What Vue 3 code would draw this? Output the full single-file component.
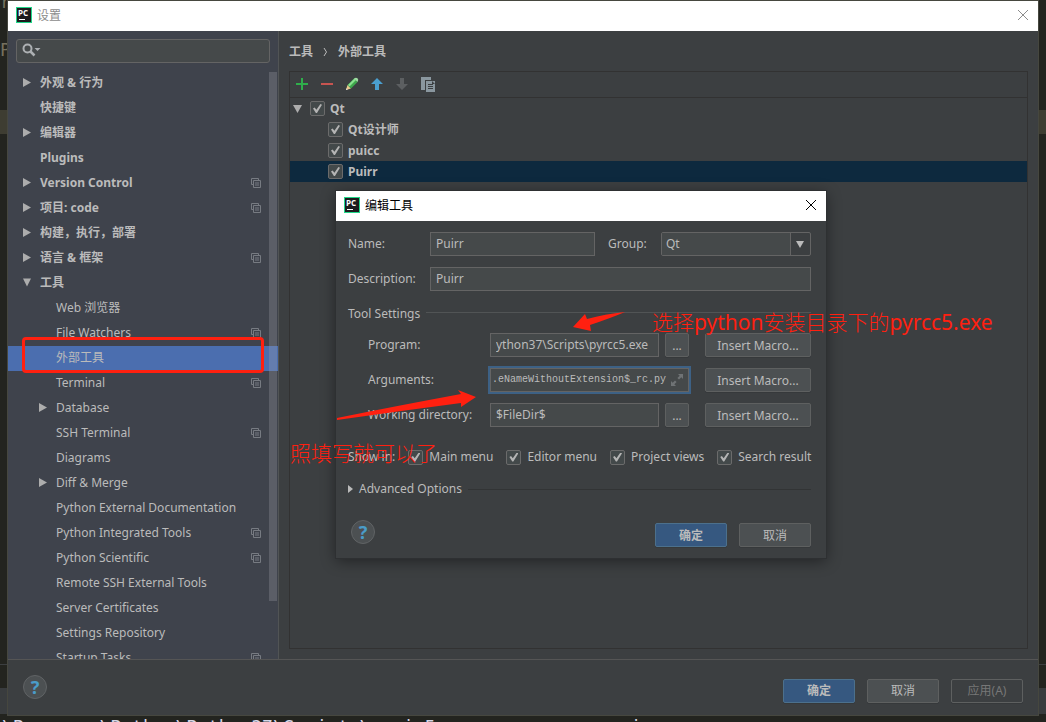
<script setup>
import { ref } from 'vue'

const nav = [
  { label: '外观 & 行为', level: 0, arrow: 'right' },
  { label: '快捷键', level: 0 },
  { label: '编辑器', level: 0, arrow: 'right' },
  { label: 'Plugins', level: 0 },
  { label: 'Version Control', level: 0, arrow: 'right', project: true },
  { label: '项目: code', level: 0, arrow: 'right', project: true },
  { label: '构建，执行，部署', level: 0, arrow: 'right' },
  { label: '语言 & 框架', level: 0, arrow: 'right', project: true },
  { label: '工具', level: 0, arrow: 'down' },
  { label: 'Web 浏览器', level: 1 },
  { label: 'File Watchers', level: 1, project: true },
  { label: '外部工具', level: 1, active: true },
  { label: 'Terminal', level: 1, project: true },
  { label: 'Database', level: 1, arrow: 'right' },
  { label: 'SSH Terminal', level: 1, project: true },
  { label: 'Diagrams', level: 1 },
  { label: 'Diff & Merge', level: 1, arrow: 'right' },
  { label: 'Python External Documentation', level: 1 },
  { label: 'Python Integrated Tools', level: 1, project: true },
  { label: 'Python Scientific', level: 1, project: true },
  { label: 'Remote SSH External Tools', level: 1 },
  { label: 'Server Certificates', level: 1 },
  { label: 'Settings Repository', level: 1 },
  { label: 'Startup Tasks', level: 1, project: true }
]

const tools = ref([
  { label: 'Qt', root: true, on: true },
  { label: 'Qt设计师', on: true },
  { label: 'puicc', on: true },
  { label: 'Puirr', on: true, active: true }
])

const showIn = ref([
  { label: 'Main menu', on: true },
  { label: 'Editor menu', on: true },
  { label: 'Project views', on: true },
  { label: 'Search result', on: true }
])

const query = ref('')
const form = ref({
  name: 'Puirr',
  group: 'Qt',
  description: 'Puirr',
  program: 'ython37\\Scripts\\pyrcc5.exe',
  args: '.eNameWithoutExtension$_rc.py',
  dir: '$FileDir$'
})
const command = '\\Programs\\Python\\Python37\\Scripts\\pyuic5 -o menu.py menu.ui'
</script>

<template>
  <div class="desktop">
    <div class="editor" aria-hidden="true">
      <span class="code code-a">r</span>
      <span class="code code-b">P</span>
      <div class="caret-line"></div>
      <div class="split-line"></div>
      <div class="tool-strip"></div>
    </div>

    <main class="window">
      <header class="titlebar">
        <svg class="logo" viewBox="0 0 16 16">
          <rect width="16" height="16" fill="#21d789" />
          <rect x="1" y="1" width="14" height="14" fill="#1c1c1e" />
          <text x="2" y="9" class="logo-text">PC</text>
          <rect x="3" y="12" width="6" height="1" fill="#fff" />
        </svg>
        <h1>设置</h1>
        <button class="close" aria-label="关闭">
          <svg viewBox="0 0 12 12"><path d="M1 1 11 11M11 1 1 11" /></svg>
        </button>
      </header>

      <div class="body">
        <aside class="sidebar">
          <label class="search">
            <svg viewBox="0 0 20 14">
              <circle cx="5.5" cy="5.5" r="4" fill="none" stroke="#adb0b3" stroke-width="2" />
              <path d="M8.5 8.5 12.5 12.5" stroke="#adb0b3" stroke-width="2.5" />
              <path d="M12.5 5H18.5L15.5 8Z" fill="#adb0b3" />
            </svg>
            <input v-model="query" type="text" aria-label="搜索设置" />
          </label>
          <nav class="tree">
            <a
              v-for="item in nav"
              :key="item.label"
              href="#"
              class="nav-row"
              :class="{ child: item.level === 1, active: item.active }"
            >
              <span class="twisty">
                <svg v-if="item.arrow === 'right'" viewBox="0 0 8 10"><path d="M0 0 8 4.5 0 9Z" /></svg>
                <svg v-if="item.arrow === 'down'" viewBox="0 0 8 10"><path d="M0 .5H8L4 8.5Z" /></svg>
              </span>
              <span class="nav-label">{{ item.label }}</span>
              <svg v-if="item.project" class="project" viewBox="0 0 10 10">
                <path d="M2.5 6.5H.5V.5H7.5V2M2.5 2.5H9.5V9.5H2.5ZM4 5H8M4 7H8" />
              </svg>
            </a>
            <span class="thumb"></span>
          </nav>
        </aside>

        <section class="content">
          <div class="crumbs">
            <span>工具</span>
            <svg viewBox="0 0 5 10"><path d="M1 1 3.5 5 1 9" /></svg>
            <span>外部工具</span>
          </div>
          <div class="panel">
            <div class="toolbar">
              <button aria-label="添加">
                <svg viewBox="0 0 16 16"><path d="M2 8H14M8 2V14" stroke="#2fae4b" stroke-width="2" /></svg>
              </button>
              <button aria-label="删除">
                <svg viewBox="0 0 16 16"><path d="M2 8H14" stroke="#c75450" stroke-width="2" /></svg>
              </button>
              <button aria-label="编辑">
                <svg viewBox="0 0 16 16">
                  <path d="M2 14 3.5 9 7 12.5Z" fill="#e8c98c" />
                  <path d="M3.5 9 10 2.5 13.5 6 7 12.5Z" fill="#3fa84c" />
                  <path d="M4 9 10.5 2.5 12 4 5.5 10.5Z" fill="#8be08f" />
                  <path d="M10 2.5Q12 1 13.5 2.3T13.5 6Z" fill="#9fdca3" />
                  <path d="M2 14 2.6 12.2 3.8 13.4Z" fill="#eee" />
                </svg>
              </button>
              <button aria-label="上移">
                <svg viewBox="0 0 16 16"><path d="M8 2 14 8H10V14H6V8H2Z" fill="#4a9fd0" /></svg>
              </button>
              <button aria-label="下移" disabled>
                <svg viewBox="0 0 16 16"><path d="M8 14 14 8H10V2H6V8H2Z" fill="#5c5f61" /></svg>
              </button>
              <button aria-label="复制">
                <svg viewBox="0 0 16 16">
                  <path d="M1 1H11V4H5V14H1Z" fill="#8a979f" />
                  <path d="M6 5H12V8H15V16H6Z" fill="#8a979f" />
                  <path d="M12 5H15V8" fill="#8a979f" />
                  <path d="M8 8.5H13M8 10.5H13M8 12.5H13" stroke="#3c3f41" />
                </svg>
              </button>
            </div>
            <ul class="tools">
              <li
                v-for="t in tools"
                :key="t.label"
                :class="{ root: t.root, active: t.active }"
              >
                <svg v-if="t.root" class="fold" viewBox="0 0 10 10"><path d="M0 1H9L4.5 9Z" /></svg>
                <label class="check"><input v-model="t.on" type="checkbox" />{{ t.label }}</label>
              </li>
            </ul>
          </div>
        </section>
      </div>

      <footer class="footer">
        <button class="help">?</button>
        <span class="spring"></span>
        <button class="btn wide primary">确定</button>
        <button class="btn wide">取消</button>
        <button class="btn wide off" disabled>应用(A)</button>
      </footer>
    </main>

    <div class="terminal">{{ command }}</div>

    <section class="dialog" role="dialog" aria-label="编辑工具">
      <header class="titlebar front">
        <svg class="logo" viewBox="0 0 16 16">
          <rect width="16" height="16" fill="#21d789" />
          <rect x="1" y="1" width="14" height="14" fill="#1c1c1e" />
          <text x="2" y="9" class="logo-text">PC</text>
          <rect x="3" y="12" width="6" height="1" fill="#fff" />
        </svg>
        <h2>编辑工具</h2>
        <button class="close" aria-label="关闭">
          <svg viewBox="0 0 12 12"><path d="M1 1 11 11M11 1 1 11" /></svg>
        </button>
      </header>

      <form class="form" @submit.prevent>
        <div class="row">
          <label class="lead" for="f-name">Name:</label>
          <input id="f-name" v-model="form.name" class="field" type="text" />
          <label class="mid" for="f-group">Group:</label>
          <div class="select">
            <select id="f-group" v-model="form.group"><option>Qt</option></select>
            <svg viewBox="0 0 8 7"><path d="M0 0H8L4 7Z" /></svg>
          </div>
        </div>
        <div class="row">
          <label class="lead" for="f-desc">Description:</label>
          <input id="f-desc" v-model="form.description" class="field" type="text" />
        </div>

        <div class="legend settings">Tool Settings<span class="rule"></span></div>

        <div class="row inset">
          <label class="lead long" for="f-prog">Program:</label>
          <input id="f-prog" v-model="form.program" class="field" type="text" />
          <button class="btn dots">...</button>
          <button class="btn macro">Insert Macro...</button>
        </div>
        <div class="row inset">
          <label class="lead long" for="f-args">Arguments:</label>
          <div class="field focus">
            <input id="f-args" v-model="form.args" type="text" />
            <svg viewBox="0 0 12 12">
              <path d="M7 0H12V5L10.3 3.3 8 5.6 6.4 4 8.7 1.7ZM0 7 1.7 8.7 4 6.4 5.6 8 3.3 10.3 5 12H0Z" />
            </svg>
          </div>
          <button class="btn macro">Insert Macro...</button>
        </div>
        <div class="row inset">
          <label class="lead long" for="f-dir">Working directory:</label>
          <input id="f-dir" v-model="form.dir" class="field" type="text" />
          <button class="btn dots">...</button>
          <button class="btn macro">Insert Macro...</button>
        </div>

        <div class="show-in">
          <span>Show in:</span>
          <label v-for="s in showIn" :key="s.label" class="check">
            <input v-model="s.on" type="checkbox" />{{ s.label }}
          </label>
        </div>

        <div class="legend advanced">
          <svg viewBox="0 0 5 8"><path d="M0 0 5 4 0 8Z" /></svg>
          Advanced Options<span class="rule dark"></span>
        </div>

        <div class="actions">
          <button class="help">?</button>
          <span class="spring"></span>
          <button class="btn wide primary">确定</button>
          <button class="btn wide">取消</button>
        </div>
      </form>
    </section>

    <div class="marks">
      <div class="mark-box"></div>
      <svg class="arrow arrow-top" viewBox="0 0 54 20">
        <path d="M0 15 12 2 14 7Q32 2 52 0 38 6 17 13L18 19Z" />
      </svg>
      <svg class="arrow arrow-args" viewBox="0 0 142 32">
        <path d="M1 29Q60 17 125 5L122 1 140 8 125 18V14Q64 22 1 31Z" />
      </svg>
      <p class="mark mark-top">选择<span>python</span>安装目录下的<span>pyrcc5.exe</span></p>
      <p class="mark mark-fill">照填写就可以了</p>
    </div>
  </div>
</template>

<style>
body {
  background: #23241f;
}
</style>

<style scoped>
* {
  box-sizing: border-box;
}
.desktop {
  position: relative;
  display: flex;
  flex-direction: column;
  height: 100vh;
  min-height: 600px;
  padding-top: 1px;
  overflow: hidden;
  background: #23241f;
  color: #bbbbbb;
  font: 12px/16px "Noto Sans", "Noto Sans CJK SC", sans-serif;
}
button,
input,
select {
  font: inherit;
  color: inherit;
}
button {
  padding: 0;
  border: 0;
  background: none;
}
h1,
h2,
p,
ul {
  margin: 0;
  padding: 0;
  font: inherit;
}
svg {
  display: block;
  flex: none;
}

.editor {
  position: absolute;
  inset: 0;
}
.code {
  position: absolute;
  left: 0;
  color: #75715e;
  font: 18px/20px "DejaVu Sans Mono", monospace;
}
.code-a {
  top: -8px;
}
.code-b {
  top: 40px;
}
.caret-line {
  position: absolute;
  top: 110px;
  width: 100%;
  height: 24px;
  background: #3e3d32;
}
.split-line {
  position: absolute;
  bottom: 57px;
  width: 100%;
  height: 1px;
  background: #3c3f41;
}
.tool-strip {
  position: absolute;
  bottom: 8px;
  width: 100%;
  height: 26px;
  background: #393c3e;
}

.window {
  position: relative;
  display: flex;
  flex: 1;
  flex-direction: column;
  min-height: 0;
  margin: 0 8px;
  background: #3c3f41;
  box-shadow: 0 0 0 1px #46473f;
}
.titlebar {
  display: flex;
  flex: none;
  align-items: center;
  height: 30px;
  padding: 0 9px 2px 8px;
  background: #ffffff;
  color: #8c8c8c;
}
.titlebar h1,
.titlebar h2 {
  flex: 1;
  padding-top: 2px;
  margin-left: 5px;
}
.logo {
  width: 16px;
  height: 16px;
}
.logo-text {
  fill: #ffffff;
  font: bold 8px "Open Sans", sans-serif;
}
.close svg {
  width: 12px;
  height: 12px;
  fill: none;
  stroke: #8c8c8c;
}
.front {
  color: #000000;
}
.front .close svg {
  stroke: #000000;
}

.body {
  display: flex;
  flex: 1;
  min-height: 0;
}
.sidebar {
  display: flex;
  flex: none;
  flex-direction: column;
  width: 271px;
  border-right: 1px solid #515455;
  background: #3f434c;
}
.search {
  display: flex;
  flex: none;
  align-items: center;
  height: 24px;
  margin: 8px;
  padding: 0 5px 2px;
  border: 1px solid #646464;
  border-radius: 3px;
  background: #45494a;
}
.search svg {
  width: 20px;
  height: 14px;
}
.search input {
  flex: 1;
  min-width: 0;
  border: 0;
  outline: 0;
  background: none;
}
.tree {
  position: relative;
  flex: 1;
  min-height: 0;
  overflow: hidden;
}
.thumb {
  position: absolute;
  top: 1px;
  right: 1px;
  width: 8px;
  height: 90%;
  background: rgba(166, 166, 176, 0.28);
}
.nav-row {
  display: flex;
  align-items: center;
  height: 25px;
  padding: 0 17px 2px 15px;
  color: #bbbbbb;
  font-weight: 700;
  text-decoration: none;
}
.nav-row.child {
  padding-left: 31px;
  font-weight: 400;
}
.nav-row.active {
  background: #4b6eaf;
}
.twisty {
  width: 17px;
}
.twisty svg {
  width: 8px;
  height: 10px;
  fill: #adadad;
}
.nav-label {
  flex: 1;
  white-space: nowrap;
}
.project {
  width: 10px;
  height: 10px;
  fill: none;
  stroke: #777b82;
}

.content {
  display: flex;
  flex: 1;
  flex-direction: column;
  min-width: 0;
  padding: 13px 10px 10px;
}
.crumbs {
  display: flex;
  gap: 10px;
  align-items: center;
  height: 16px;
  margin-bottom: 11px;
  font-weight: 600;
}
.crumbs svg {
  width: 5px;
  height: 10px;
  fill: none;
  stroke: #bbbbbb;
}
.panel {
  flex: 1;
  min-height: 0;
  border: 1px solid #323232;
}
.toolbar {
  display: flex;
  gap: 9px;
  align-items: center;
  height: 26px;
  padding: 0 4px 1px;
  border-bottom: 1px solid #323232;
}
.toolbar svg {
  width: 16px;
  height: 16px;
}
.toolbar button:last-child {
  margin-left: 1px;
}
.tools {
  list-style: none;
}
.tools li {
  display: flex;
  align-items: center;
  height: 21px;
  padding-left: 38px;
  font-weight: 700;
}
.tools .root {
  gap: 7px;
  padding-left: 3px;
}
.tools .active {
  background: #0d293e;
}
.fold {
  width: 10px;
  height: 10px;
  fill: #adadad;
}
.check {
  display: flex;
  gap: 5px;
  align-items: center;
}
.check input {
  display: grid;
  place-items: center;
  width: 15px;
  height: 15px;
  margin: 0;
  border: 1px solid #6b6b6b;
  border-radius: 2px;
  background: #43494a;
  appearance: none;
}
.check input:checked::after {
  width: 9px;
  height: 9px;
  background: #b4b4b4;
  clip-path: polygon(0 50%, 18% 40%, 38% 65%, 82% 0, 100% 8%, 44% 100%, 32% 100%);
  content: "";
}

.footer {
  display: flex;
  flex: none;
  align-items: center;
  height: 56px;
  padding: 6px 15px 0;
  border-top: 1px solid #555555;
}
.spring {
  flex: 1;
}
.help {
  align-self: flex-start;
  width: 24px;
  height: 24px;
  border: 1px solid #606365;
  border-radius: 50%;
  background: #4c5052;
  color: #4a9cc9;
  font-size: 18px;
  font-weight: 700;
  line-height: 20px;
}
.footer .help {
  margin-top: 9px;
}
.btn {
  height: 24px;
  padding-top: 1px;
  border: 1px solid #5e6060;
  border-radius: 2px;
  background: #4c5052;
  box-shadow: 0 1px 0 #36393b;
  text-align: center;
}
.wide {
  width: 72px;
  margin-left: 12px;
}
.primary {
  border-color: #4c708c;
  background: #365880;
  font-weight: 600;
}
.off {
  background: #3c3f41;
  color: #777777;
}

.terminal {
  flex: none;
  height: 7px;
  padding: 2px 0 0 2px;
  overflow: hidden;
  background: #23241f;
  color: #d6d6e8;
  font: 18px/20px "DejaVu Sans Mono", monospace;
  white-space: pre;
}

.dialog {
  position: absolute;
  top: 191px;
  left: 336px;
  width: 490px;
  background: #3c3f41;
  box-shadow: 0 0 0 1px #2e3032, 0 3px 14px rgba(0, 0, 0, 0.45);
}
.form {
  display: flex;
  flex-direction: column;
  gap: 11px;
  padding: 11px 15px 8px 12px;
}
.row {
  display: flex;
  align-items: center;
  height: 24px;
}
.inset {
  padding-left: 20px;
}
.lead {
  flex: none;
  width: 82px;
  white-space: nowrap;
}
.long {
  width: 122px;
}
.mid {
  width: 66px;
  padding-left: 13px;
}
.field {
  flex: 1;
  min-width: 0;
  height: 24px;
  padding: 0 5px 1px;
  border: 1px solid #646464;
  outline: 0;
  background: #45494a;
}
.select {
  display: flex;
  align-items: center;
  width: 150px;
  height: 24px;
  border: 1px solid #646464;
  border-radius: 2px;
}
.select select {
  flex: 1;
  height: 22px;
  padding: 0 4px;
  border: 0;
  border-right: 1px solid #646464;
  outline: 0;
  background: #45494a;
  appearance: none;
}
.select svg {
  width: 8px;
  height: 7px;
  margin: 0 6px 0 5px;
  fill: #bbbbbb;
}
.dots {
  width: 24px;
  margin-left: 6px;
}
.macro {
  width: 106px;
  margin-left: 16px;
}
.focus {
  display: flex;
  align-items: center;
  padding-left: 1px;
  box-shadow: 0 0 0 2px #3d6185;
}
.focus input {
  flex: 1;
  width: 0;
  padding: 0;
  border: 0;
  outline: 0;
  background: none;
  font: 10px/16px "Liberation Mono", monospace;
}
.focus svg {
  width: 12px;
  height: 12px;
  fill: #6f7375;
}
.legend {
  display: flex;
  gap: 6px;
  align-items: center;
  height: 20px;
}
.rule {
  flex: 1;
  height: 1px;
  background: #515455;
}
.settings {
  padding-top: 4px;
}
.settings .rule {
  margin-bottom: 4px;
}
.dark {
  background: #323435;
}
.show-in {
  display: flex;
  gap: 13px;
  align-items: center;
  height: 16px;
  margin-top: 11px;
  white-space: nowrap;
}
.show-in .check {
  gap: 6px;
}
.advanced {
  margin-top: 3px;
}
.advanced svg {
  width: 5px;
  height: 8px;
  fill: #bbbbbb;
}
.actions {
  display: flex;
  align-items: center;
  height: 30px;
  margin-top: 10px;
  padding-left: 3px;
}

.marks {
  position: absolute;
  inset: 0;
  color: #ff2010;
  pointer-events: none;
}
.mark-box {
  position: absolute;
  top: 337px;
  left: 22px;
  width: 242px;
  height: 36px;
  border: 3px solid #ff2010;
  border-radius: 4px;
}
.arrow {
  position: absolute;
  fill: #ff2010;
}
.arrow-top {
  top: 312px;
  left: 573px;
  width: 54px;
  height: 20px;
}
.arrow-args {
  top: 389px;
  left: 336px;
  width: 142px;
  height: 32px;
}
.mark {
  position: absolute;
  font-size: 21px;
  font-weight: 300;
  line-height: 28px;
  white-space: nowrap;
}
.mark span {
  font-weight: 400;
}
.mark-top {
  top: 308px;
  left: 652px;
}
.mark-fill {
  top: 439px;
  left: 290px;
}
</style>
